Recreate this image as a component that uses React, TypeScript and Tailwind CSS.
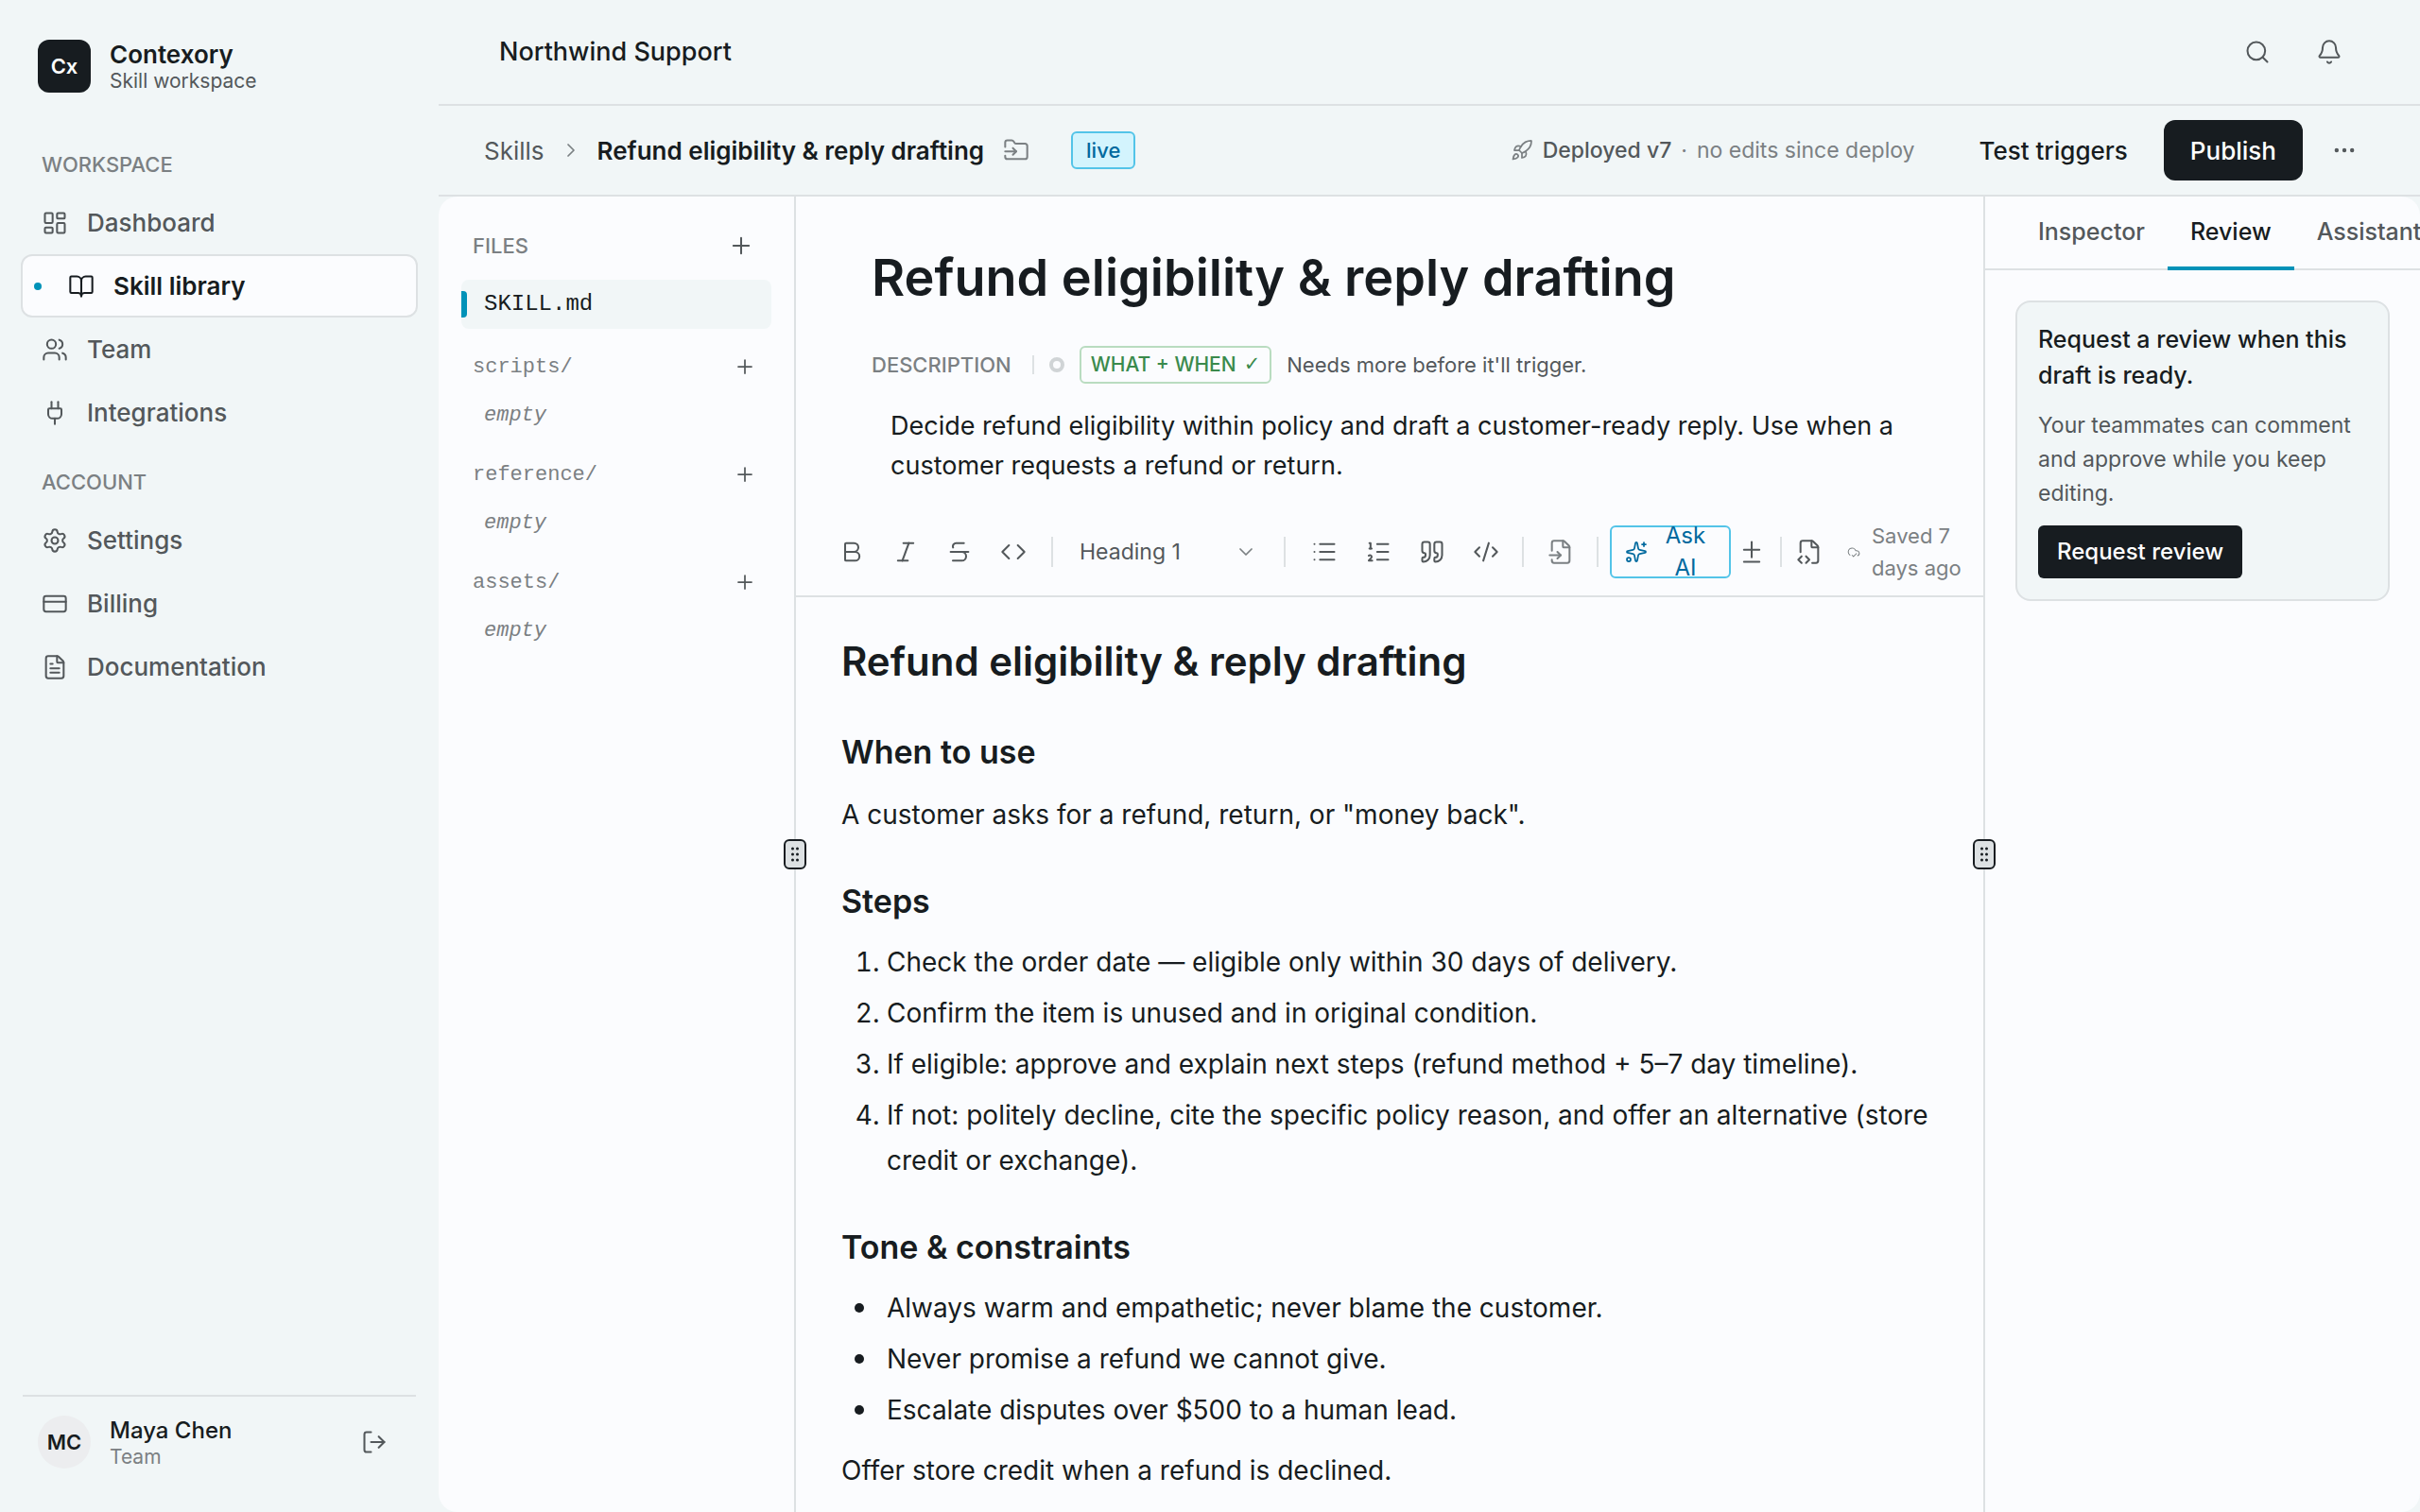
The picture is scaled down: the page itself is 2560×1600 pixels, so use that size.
import React, { useState } from 'react';
import {
  Bell,
  Bold,
  BookOpen,
  ChevronDown,
  ChevronRight,
  CloudCheck,
  Code,
  CodeXml,
  CreditCard,
  Diff,
  Ellipsis,
  FileInput,
  FileCode2,
  FileText,
  FolderInput,
  Italic,
  LayoutDashboard,
  List,
  ListOrdered,
  LogOut,
  Plug,
  Plus,
  Quote,
  Rocket,
  Search,
  Settings,
  Sparkles,
  Strikethrough,
  Users,
  type LucideIcon,
} from 'lucide-react';

interface NavEntry {
  label: string;
  icon: LucideIcon;
}

const workspaceNav: NavEntry[] = [
  { label: 'Dashboard', icon: LayoutDashboard },
  { label: 'Skill library', icon: BookOpen },
  { label: 'Team', icon: Users },
  { label: 'Integrations', icon: Plug },
];

const accountNav: NavEntry[] = [
  { label: 'Settings', icon: Settings },
  { label: 'Billing', icon: CreditCard },
  { label: 'Documentation', icon: FileText },
];

const folders = ['scripts/', 'reference/', 'assets/'];

const steps = [
  'Check the order date — eligible only within 30 days of delivery.',
  'Confirm the item is unused and in original condition.',
  'If eligible: approve and explain next steps (refund method + 5–7 day timeline).',
  'If not: politely decline, cite the specific policy reason, and offer an alternative (store credit or exchange).',
];

const constraints = [
  'Always warm and empathetic; never blame the customer.',
  'Never promise a refund we cannot give.',
  'Escalate disputes over $500 to a human lead.',
];

const NavItem: React.FC<{ entry: NavEntry; active: boolean }> = ({ entry, active }) => {
  const Icon = entry.icon;
  return (
    <a
      href="#"
      aria-current={active ? 'page' : undefined}
      className={`flex h-[67px] items-center rounded-xl border-2 text-[26px] ${
        active
          ? 'border-[#dde1e3] bg-[#fbfcfe] px-3 font-semibold text-[#171c20]'
          : 'border-transparent px-5 font-medium text-[#53585b]'
      }`}
    >
      {active && <span className="mr-7 size-2 rounded-full bg-[#0092b8]" />}
      <Icon size={28} strokeWidth={1.75} className="mr-5 shrink-0" />
      {entry.label}
    </a>
  );
};

const Sidebar: React.FC = () => (
  <aside className="flex w-[464px] shrink-0 flex-col px-[22px] pb-[46px]">
    <div className="flex items-center gap-5 px-[18px] pt-[42px]">
      <div className="flex size-14 items-center justify-center rounded-xl bg-[#171c20] text-[22px] font-semibold text-white">
        Cx
      </div>
      <div>
        <div className="text-[26px] leading-8 font-semibold text-[#171c20]">Contexory</div>
        <div className="text-[21px] leading-6 text-[#53585b]">Skill workspace</div>
      </div>
    </div>

    <nav className="mt-14 flex-1">
      <div className="mb-2 px-[22px] text-[22px] leading-10 font-medium text-[#7b8083]">WORKSPACE</div>
      {workspaceNav.map((entry) => (
        <NavItem key={entry.label} entry={entry} active={entry.label === 'Skill library'} />
      ))}
      <div className="mt-5 mb-2 px-[22px] text-[22px] leading-10 font-medium text-[#7b8083]">ACCOUNT</div>
      {accountNav.map((entry) => (
        <NavItem key={entry.label} entry={entry} active={false} />
      ))}
    </nav>

    <div className="mx-0.5 flex items-center gap-5 border-t-2 border-[#dde1e3] px-4 pt-5">
      <div className="flex size-14 items-center justify-center rounded-full bg-[#ecedef] text-[22px] font-semibold text-[#171c20]">
        MC
      </div>
      <div className="flex-1">
        <div className="text-[24px] leading-8 font-medium text-[#171c20]">Maya Chen</div>
        <div className="text-[21px] leading-6 text-[#7b8083]">Team</div>
      </div>
      <button aria-label="Log out" className="p-3.5 text-[#53585b]">
        <LogOut size={28} strokeWidth={1.75} />
      </button>
    </div>
  </aside>
);

const SkillHeader: React.FC = () => (
  <div className="flex h-24 shrink-0 items-center border-b-2 border-[#dde1e3] pr-[66px] pl-12">
    <a href="#" className="text-[26px] text-[#53585b]">
      Skills
    </a>
    <ChevronRight size={24} strokeWidth={1.75} className="mx-4 text-[#7b8083]" />
    <span className="text-[26px] font-semibold text-[#171c20]">Refund eligibility &amp; reply drafting</span>
    <button aria-label="Move to folder" className="ml-5 text-[#7b8083]">
      <FolderInput size={28} strokeWidth={1.75} />
    </button>
    <span className="ml-11 flex h-10 items-center rounded-md border-2 border-[#53c4e8] bg-[#d3f4fd] px-3.5 text-[22px] font-medium text-[#00699e]">
      live
    </span>

    <div className="ml-auto flex items-center text-[23px] text-[#7b8083]">
      <Rocket size={24} strokeWidth={1.75} className="mr-2.5" />
      <span className="font-medium text-[#53585b]">Deployed v7</span>
      <span className="mx-2.5">·</span>
      <span>no edits since deploy</span>
    </div>
    <button className="ml-12 px-5 text-[26px] font-medium text-[#171c20]">Test triggers</button>
    <button className="ml-[18px] h-16 rounded-xl bg-[#171c20] px-7 text-[26px] font-medium text-white">Publish</button>
    <button aria-label="More actions" className="ml-[30px] text-[#53585b]">
      <Ellipsis size={28} strokeWidth={1.75} />
    </button>
  </div>
);

const FilesPanel: React.FC = () => (
  <section className="w-[376px] shrink-0 px-6 pt-8">
    <div className="flex h-10 items-center justify-between px-3">
      <h2 className="text-[22px] font-medium text-[#7b8083]">FILES</h2>
      <button aria-label="New file" className="p-1.5 text-[#53585b]">
        <Plus size={28} strokeWidth={1.75} />
      </button>
    </div>
    <button className="mt-4 flex h-[52px] w-full items-center gap-[18px] rounded-lg bg-[#f1f6f7] font-['Liberation_Mono',monospace] text-[24px] text-[#171c20]">
      <span className="h-7 w-1.5 rounded-r-sm bg-[#0092b8]" />
      SKILL.md
    </button>
    <div className="mt-5 space-y-4 font-['Liberation_Mono',monospace] text-[22px] text-[#7b8083]">
      {folders.map((folder) => (
        <div key={folder}>
          <div className="flex h-10 items-center justify-between px-3">
            {folder}
            <button aria-label={`Add to ${folder}`} className="p-1 text-[#53585b]">
              <Plus size={24} strokeWidth={1.75} />
            </button>
          </div>
          <div className="mt-3 h-[46px] px-6 leading-10 italic">empty</div>
        </div>
      ))}
    </div>
  </section>
);

const ResizeHandle: React.FC<{ label: string }> = ({ label }) => (
  <div className="relative w-0.5 shrink-0 bg-[#dde1e3]">
    <button
      aria-label={label}
      className="absolute top-1/2 left-1/2 z-10 flex h-8 w-6 -translate-x-1/2 -translate-y-1/2 items-center justify-center rounded-md border-2 border-[#171c20] bg-[#dde1e3]"
    >
      <svg width="10" height="18" viewBox="0 0 10 18" fill="#171c20">
        {[3, 9, 15].map((y) => (
          <React.Fragment key={y}>
            <circle cx="2.5" cy={y} r="1.5" />
            <circle cx="7.5" cy={y} r="1.5" />
          </React.Fragment>
        ))}
      </svg>
    </button>
  </div>
);

const ToolButton: React.FC<{ label: string; icon: LucideIcon; muted?: boolean }> = ({ label, icon: Icon, muted }) => (
  <button
    aria-label={label}
    className={`flex h-14 w-[57px] items-center justify-center ${muted ? 'text-[#7b8083]' : 'text-[#53585b]'}`}
  >
    <Icon size={28} strokeWidth={1.75} />
  </button>
);

const Divider: React.FC = () => <span className="h-8 w-0.5 shrink-0 bg-[#dde1e3]" />;

const Toolbar: React.FC = () => (
  <div className="mt-[22px] flex h-24 items-center border-b-2 border-[#dde1e3] pt-0.5 pr-4 pl-[30px]">
    <ToolButton label="Bold" icon={Bold} />
    <ToolButton label="Italic" icon={Italic} />
    <ToolButton label="Strikethrough" icon={Strikethrough} />
    <ToolButton label="Inline code" icon={Code} />
    <div className="w-3" />
    <Divider />
    <label className="relative mx-3 flex w-[220px] items-center">
      <select
        aria-label="Block type"
        defaultValue="Heading 1"
        className="h-14 w-full appearance-none bg-transparent px-4 text-[23px] text-[#53585b]"
      >
        <option>Heading 1</option>
        <option>Heading 2</option>
        <option>Paragraph</option>
      </select>
      <ChevronDown
        size={24}
        strokeWidth={1.75}
        className="pointer-events-none absolute right-4 text-[#7b8083]"
      />
    </label>
    <Divider />
    <div className="w-3" />
    <ToolButton label="Bullet list" icon={List} />
    <ToolButton label="Numbered list" icon={ListOrdered} />
    <ToolButton label="Quote" icon={Quote} />
    <ToolButton label="Code block" icon={CodeXml} />
    <div className="w-2.5" />
    <Divider />
    <div className="w-2.5" />
    <ToolButton label="Insert file reference" icon={FileInput} muted />
    <div className="w-2.5" />
    <Divider />
    <button className="ml-3 flex h-14 w-32 shrink-0 items-center rounded-md border-2 border-[#53c4e8] px-3.5 text-[24px] leading-[34px] text-[#00699e]">
      <Sparkles size={24} strokeWidth={1.75} className="shrink-0" />
      <span className="flex-1 pr-2 pl-4">Ask AI</span>
    </button>
    <button aria-label="Show changes" className="px-2 text-[#53585b]">
      <Diff size={28} strokeWidth={1.75} />
    </button>
    <div className="w-2" />
    <Divider />
    <ToolButton label="View source" icon={FileCode2} />
    <div className="ml-3 flex flex-1 items-center gap-3 text-[22px] leading-[34px] text-[#7b8083]">
      <CloudCheck size={14} strokeWidth={1.75} className="shrink-0" />
      <span>Saved 7 days ago</span>
    </div>
  </div>
);

const Editor: React.FC = () => (
  <section className="flex min-w-0 flex-1 flex-col overflow-hidden text-[#171c20]">
    <div className="px-20 pt-12">
      <h1 className="text-[54px] leading-[76px] font-semibold">Refund eligibility &amp; reply drafting</h1>
      <div className="mt-[34px] flex h-10 items-center">
        <label htmlFor="skill-description" className="text-[22px] font-medium text-[#7b8083]">
          DESCRIPTION
        </label>
        <span className="ml-[22px] h-5 w-0.5 bg-[#dde1e3]" />
        <span className="ml-4 size-4 rounded-full border-4 border-[#d0d4d6]" />
        <span className="ml-4 flex h-10 items-center gap-2 rounded-md border-2 border-[#b9dcc0] px-2.5 text-[21px] font-medium text-[#3a8a4c]">
          WHAT + WHEN <span className="font-['DejaVu_Sans',sans-serif] font-normal">✓</span>
        </span>
        <span className="ml-4 text-[22px] text-[#53585b]">Needs more before it'll trigger.</span>
      </div>
      <textarea
        id="skill-description"
        rows={2}
        defaultValue="Decide refund eligibility within policy and draft a customer-ready reply. Use when a customer requests a refund or return."
        className="mt-6 block w-full resize-none overflow-hidden bg-transparent pr-2 pl-5 text-[27px] leading-[42px]"
      />
    </div>

    <Toolbar />

    <article className="px-12 pt-10 text-[28px] leading-[48px]">
      <h2 className="text-[42px] leading-[56px] font-semibold">Refund eligibility &amp; reply drafting</h2>
      <h3 className="mt-11 text-[34px] leading-[48px] font-semibold">When to use</h3>
      <p className="mt-[18px]">A customer asks for a refund, return, or "money back".</p>
      <h3 className="mt-11 text-[34px] leading-[48px] font-semibold">Steps</h3>
      <ol className="mt-4 list-decimal space-y-1.5 pl-12">
        {steps.map((step) => (
          <li key={step}>{step}</li>
        ))}
      </ol>
      <h3 className="mt-11 text-[34px] leading-[48px] font-semibold">Tone &amp; constraints</h3>
      <ul className="mt-4 space-y-1.5 pl-[14px]">
        {constraints.map((item) => (
          <li key={item} className="flex items-center gap-6">
            <span className="size-2.5 shrink-0 rounded-full bg-[#171c20]" />
            {item}
          </li>
        ))}
      </ul>
      <p className="mt-4">Offer store credit when a refund is declined.</p>
    </article>
  </section>
);

const tabs = ['Inspector', 'Review', 'Assistant'];

const ReviewPanel: React.FC = () => {
  const [activeTab, setActiveTab] = useState('Review');

  return (
    <section className="w-[460px] shrink-0 overflow-hidden">
      <div role="tablist" className="flex h-[78px] border-b-2 border-[#dde1e3] pl-8">
        {tabs.map((tab) => (
          <button
            key={tab}
            role="tab"
            aria-selected={tab === activeTab}
            onClick={() => setActiveTab(tab)}
            className={`-mb-0.5 border-b-4 px-6 pt-0.5 text-[25px] font-medium ${
              tab === activeTab ? 'border-[#0092b8] text-[#171c20]' : 'border-transparent text-[#53585b]'
            }`}
          >
            {tab}
          </button>
        ))}
      </div>
      <div className="m-8 rounded-2xl border-2 border-[#dde1e3] bg-[#f1f6f7] px-[22px] pt-5 pb-[22px]">
        <h2 className="text-[25px] leading-[38px] font-medium text-[#171c20]">
          Request a review when this draft is ready.
        </h2>
        <p className="mt-4 text-[23px] leading-9 text-[#53585b]">
          Your teammates can comment and approve while you keep editing.
        </p>
        <button className="mt-4 h-14 rounded-md bg-[#171c20] px-5 text-[24px] font-medium text-white">
          Request review
        </button>
      </div>
    </section>
  );
};

export default function App() {
  return (
    <div className="flex h-screen overflow-hidden bg-[#f1f6f7] font-['Inter',sans-serif]">
      <Sidebar />
      <div className="flex min-w-0 flex-1 flex-col">
        <header className="flex h-28 shrink-0 items-center justify-between border-b-2 border-[#dde1e3] pr-[82px] pl-16">
          <span className="text-[27px] font-medium text-[#171c20]">Northwind Support</span>
          <div className="flex gap-12 text-[#53585b]">
            <button aria-label="Search">
              <Search size={28} strokeWidth={1.75} />
            </button>
            <button aria-label="Notifications">
              <Bell size={28} strokeWidth={1.75} />
            </button>
          </div>
        </header>
        <SkillHeader />
        <main className="flex min-h-0 flex-1 rounded-[20px] bg-[#fbfcfe]">
          <FilesPanel />
          <ResizeHandle label="Resize files panel" />
          <Editor />
          <ResizeHandle label="Resize review panel" />
          <ReviewPanel />
        </main>
      </div>
    </div>
  );
}
